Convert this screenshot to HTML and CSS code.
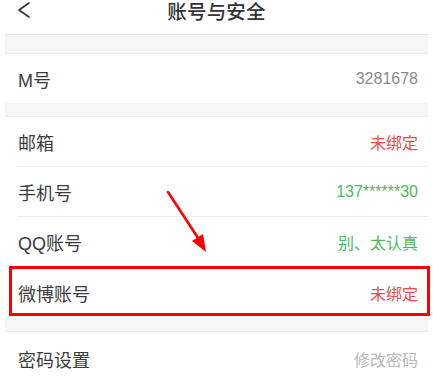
FILE: index.html
```html
<!DOCTYPE html>
<html lang="zh-CN">
<head>
<meta charset="utf-8">
<title>账号与安全</title>
<link rel="stylesheet" href="styles.css">
</head>
<body>
<div class="page">
  <header class="header">
    <svg class="back" width="14" height="18" viewBox="0 0 14 18"><polyline points="12,2 2,9 12,16" fill="none" stroke="#333" stroke-width="1.6" stroke-linecap="round" stroke-linejoin="round"/></svg>
    <h1 class="title">账号与安全</h1>
  </header>
  <div class="band band-top"></div>
  <div class="group">
    <div class="row row-first"><span class="label">M号</span><span class="value gray">3281678</span></div>
  </div>
  <div class="band"></div>
  <div class="group">
    <div class="row row-first"><span class="label">邮箱</span><span class="value red">未绑定</span></div>
    <div class="row"><span class="label">手机号</span><span class="value green">137******30</span></div>
    <div class="row"><span class="label">QQ账号</span><span class="value green">别、太认真</span></div>
    <div class="row row-weibo"><span class="label">微博账号</span><span class="value red">未绑定</span><div class="highlight"></div></div>
  </div>
  <div class="band"></div>
  <div class="group">
    <div class="row row-first row-last"><span class="label">密码设置</span><span class="value light">修改密码</span></div>
  </div>
  <svg class="arrow" width="433" height="383" viewBox="0 0 433 383">
    <line x1="168" y1="192" x2="200" y2="241" stroke="#ff0000" stroke-width="2.6" stroke-linecap="round"/>
    <polygon points="206,252 192,241 203,234" fill="#ff0000"/>
  </svg>
</div>
</body>
</html>
```

FILE: styles.css
```css
* { box-sizing: border-box; }
html, body { margin: 0; padding: 0; background: #fff; }
body {
  width: 433px;
  height: 383px;
  overflow: hidden;
  font-family: "Liberation Sans", "Noto Sans CJK SC", sans-serif;
}
.page {
  position: relative;
  padding: 0 5px;
}
.header {
  position: relative;
  height: 35px;
  border-bottom: 1px solid #e3e3e3;
  display: flex;
  justify-content: center;
  align-items: flex-start;
}
.back {
  position: absolute;
  left: 12px;
  top: 1px;
}
.title {
  margin: 0;
  font-size: 19.5px;
  font-weight: 500;
  color: #333;
  line-height: 24px;
  letter-spacing: 0.2px;
}
.band {
  height: 14px;
  background: #f6f6f6;
  border-bottom: 1px solid #ececec;
}
.band-top { height: 19px; }
.group {
  padding-left: 12px;
}
.row {
  position: relative;
  height: 50px;
  display: flex;
  align-items: center;
  justify-content: space-between;
  padding: 0 10px 0 1px;
  border-top: 1px solid #ececec;
}
.row-first { border-top: none; height: 49px; }
.row-last { padding-top: 4px; }
.row-weibo { height: 52px; }
.label {
  font-size: 18px;
  color: #3c3c3c;
}
.value { font-size: 16px; }
.gray { color: #8a8a8a; }
.red { color: #f0484e; }
.green { color: #4cba5a; }
.light { color: #b8b8b8; }
.highlight {
  position: absolute;
  left: -8px;
  right: -2px;
  top: -1px;
  height: 50px;
  border: 3px solid #ff0000;
}
.arrow {
  position: absolute;
  left: 0;
  top: 0;
  pointer-events: none;
}
```
